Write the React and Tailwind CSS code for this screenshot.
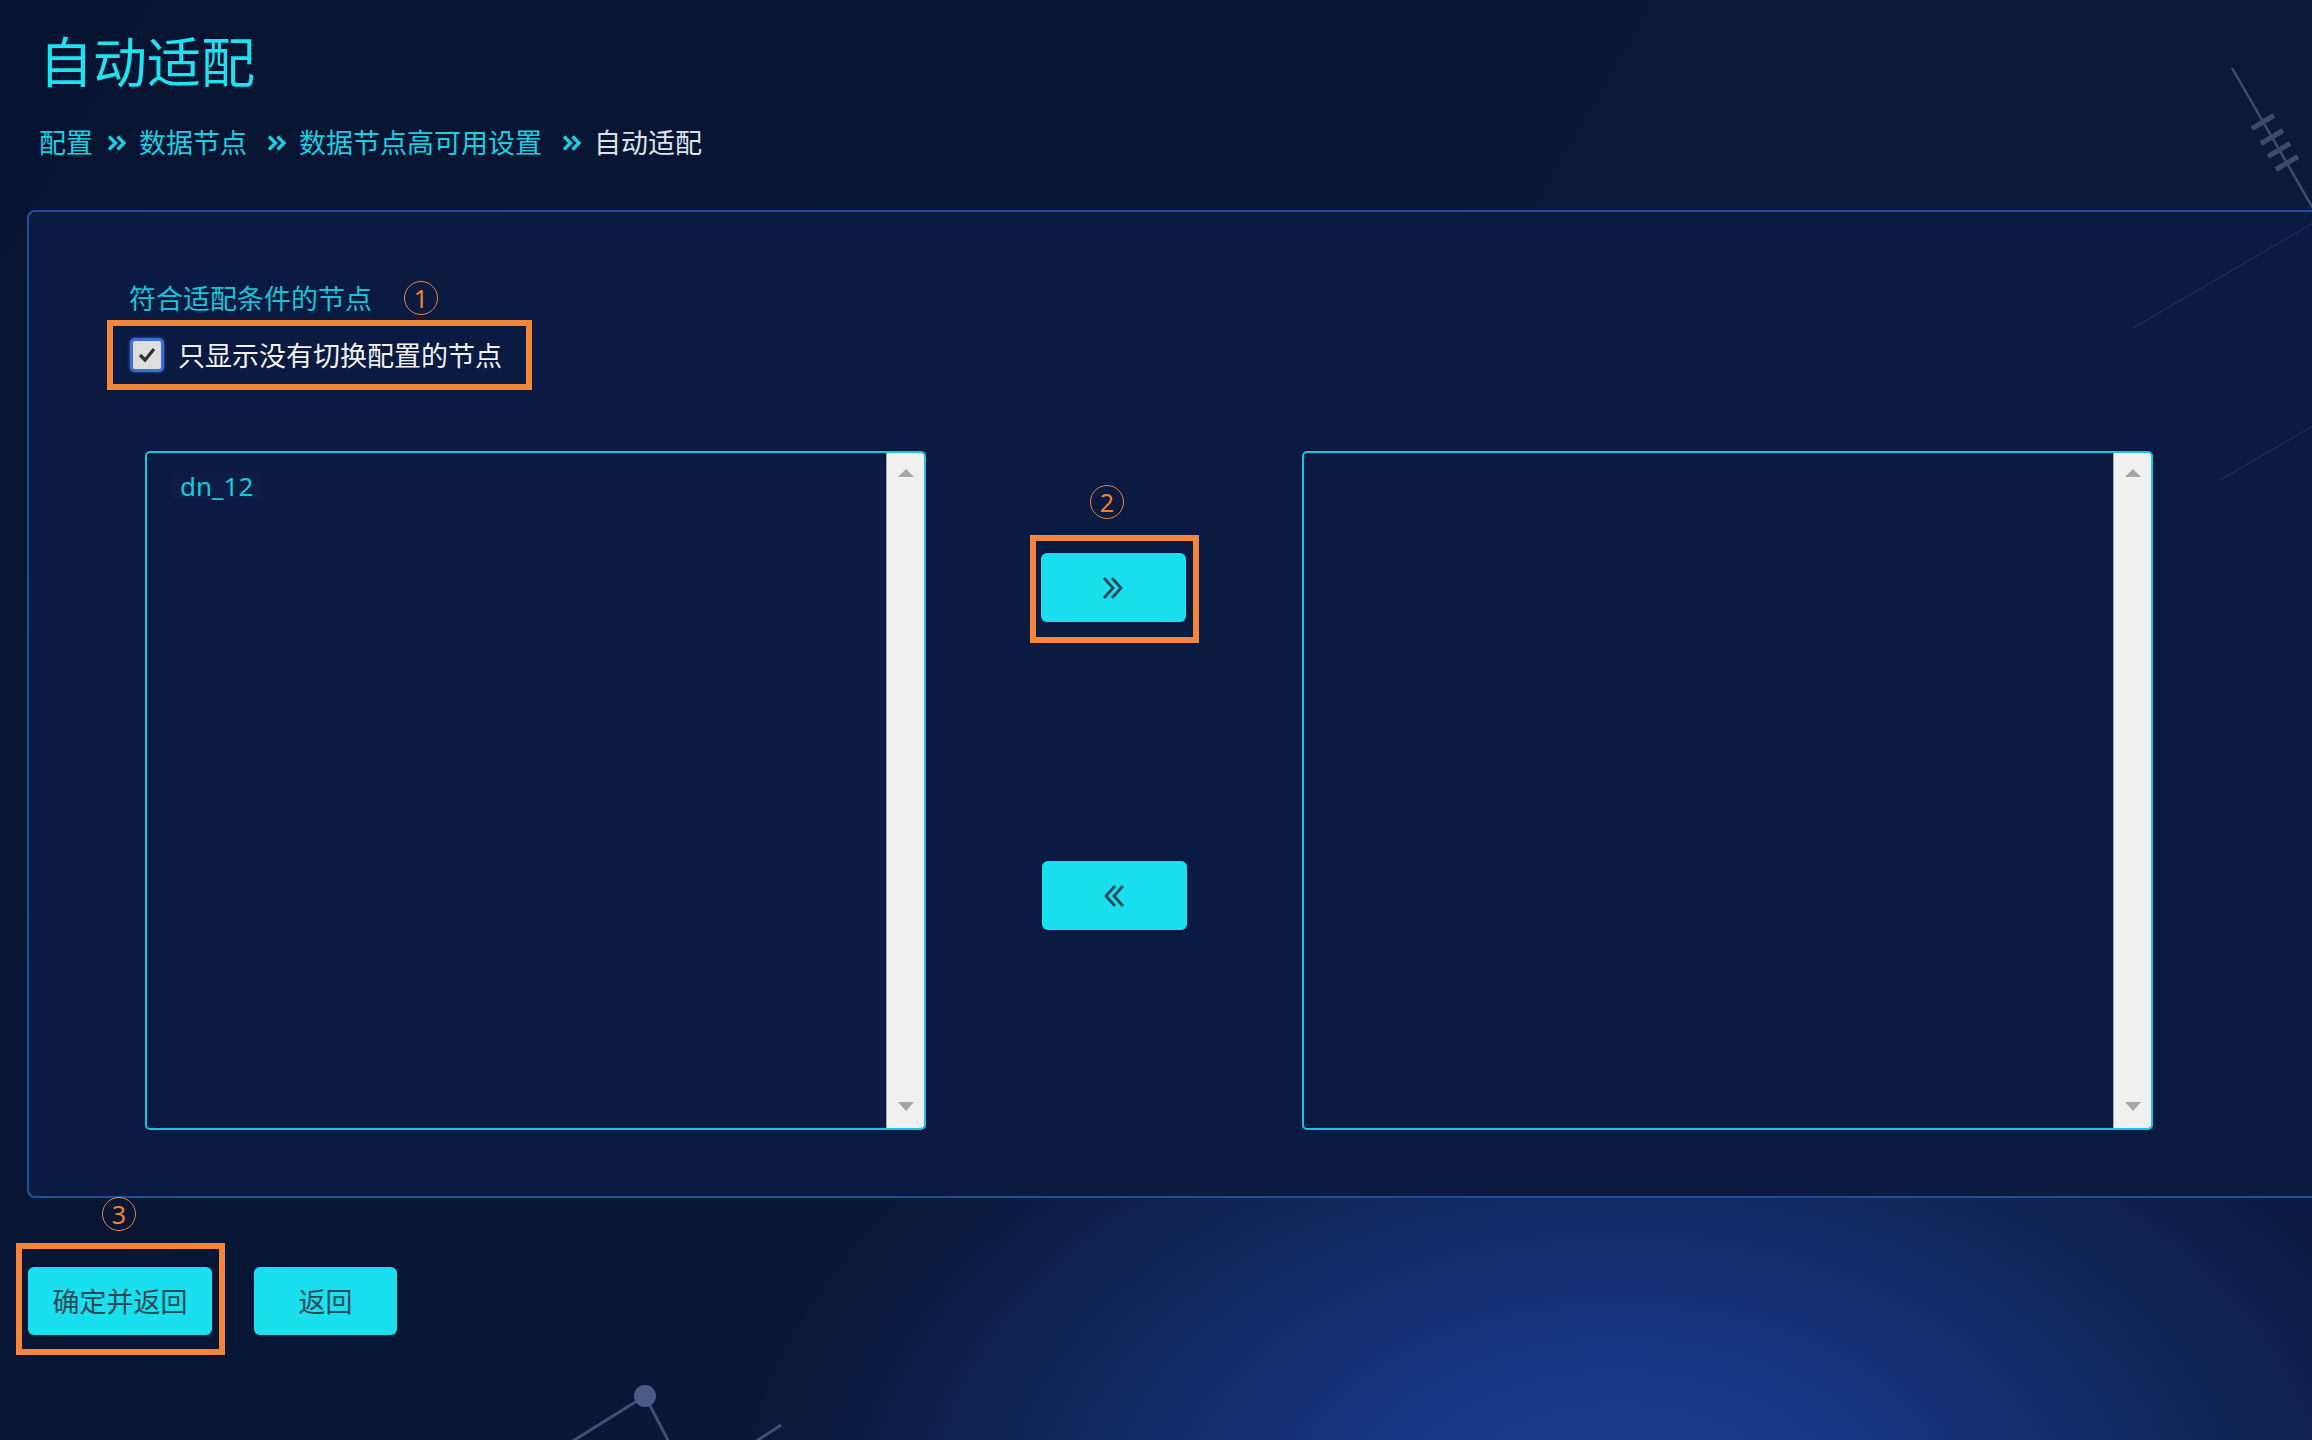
import React from "react";

function Sep({ className }) {
  return (
    <svg width="20" height="16" viewBox="0 0 20 16" className={className}>
      <polyline points="2,1.5 8.5,8 2,14.5" fill="none" stroke="#19cfe0" strokeWidth="3.4" />
      <polyline points="10.5,1.5 17,8 10.5,14.5" fill="none" stroke="#19cfe0" strokeWidth="3.4" />
    </svg>
  );
}

function Circled({ n, className = "" }) {
  return (
    <div
      className={
        "flex h-[34px] w-[34px] items-center justify-center rounded-full border-[1.5px] border-[#ec8236] text-[25px] leading-none text-[#ec8236] " +
        className
      }
    >
      {n}
    </div>
  );
}

function Chevrons({ dir }) {
  const right = dir === "right";
  return (
    <svg width="26" height="24" viewBox="0 0 26 24">
      {right ? (
        <>
          <polyline points="4,2 13,12 4,22" fill="none" stroke="#2d4a5a" strokeWidth="2.8" />
          <polyline points="12,2 21,12 12,22" fill="none" stroke="#2d4a5a" strokeWidth="2.8" />
        </>
      ) : (
        <>
          <polyline points="14,2 5,12 14,22" fill="none" stroke="#2d4a5a" strokeWidth="2.8" />
          <polyline points="22,2 13,12 22,22" fill="none" stroke="#2d4a5a" strokeWidth="2.8" />
        </>
      )}
    </svg>
  );
}

function ListBox({ width, items }) {
  return (
    <div
      className="flex h-[679px] shrink-0 overflow-hidden rounded-[5px] border-2 border-[#15c6dc] bg-[#0b1a40]"
      style={{ width }}
    >
      <div className="flex-1 pt-[20px] pl-[26px]">
        {items.map((it) => (
          <div key={it} className="w-fit bg-[#0d1d46] px-[7px] text-[26px] leading-[26px] text-[#18c8de]">
            {it}
          </div>
        ))}
      </div>
      <div className="flex w-[38px] flex-col items-center justify-between border-l border-[#9ea6b0] bg-[#f0f0f0] pt-[16px] pb-[17px]">
        <svg width="16" height="8" viewBox="0 0 16 8">
          <polygon points="8,0 16,8 0,8" fill="#a6a6a6" />
        </svg>
        <svg width="16" height="9" viewBox="0 0 16 9">
          <polygon points="0,0 16,0 8,9" fill="#a6a6a6" />
        </svg>
      </div>
    </div>
  );
}

export default function App() {
  return (
    <div className="relative h-[1440px] w-[2312px] overflow-hidden bg-[radial-gradient(ellipse_880px_560px_at_1620px_1520px,#1a3e92_0%,#16357e_35%,#0f2556_70%,rgba(10,24,60,0)_100%),linear-gradient(120deg,#071431_0%,#0a1838_50%,#0b1a40_100%)] font-['Noto_Sans','Noto_Sans_CJK_SC',sans-serif]">
      <div className="relative z-10 flex flex-col">
        {/* Header */}
        <div className="pl-[39px] pt-[35px]">
          <h1 className="text-[54px] font-normal leading-[54px] text-[#1fe2f0]">自动适配</h1>
          <div className="mt-[40px] flex items-center text-[27px] leading-[27px] text-[#19cfe0]">
            <span>配置</span>
            <Sep className="ml-[14px] mr-[12px]" />
            <span>数据节点</span>
            <Sep className="ml-[20px] mr-[12px]" />
            <span>数据节点高可用设置</span>
            <Sep className="ml-[20px] mr-[12px]" />
            <span className="text-[#dde2ea]">自动适配</span>
          </div>
        </div>

        {/* Panel */}
        <div className="ml-[27px] mt-[54px] h-[988px] w-[2330px] shrink-0 rounded-[8px] border-2 border-[#1c509a] bg-[#0b1a40]">
          <div className="flex flex-col pt-[69px]">
            <div className="ml-[100px] flex items-center">
              <span className="text-[27px] leading-[27px] text-[#16c3d8]">符合适配条件的节点</span>
              <Circled n="1" className="ml-[32px]" />
            </div>
            <div className="ml-[78px] mt-[5px] flex w-fit items-center border-[6px] border-[#f5853a] py-[12px] pl-[17px] pr-[24px]">
              <div className="flex h-[34px] w-[34px] items-center justify-center rounded-[5px] border-[3px] border-[#3f6fd6] bg-[#dedede] shadow-[0_0_3px_#3f6fd6]">
                <svg width="20" height="20" viewBox="0 0 20 20">
                  <polyline points="3,10 8,15 17,4" fill="none" stroke="#333" strokeWidth="3.2" />
                </svg>
              </div>
              <span className="ml-[14px] text-[27px] leading-[27px] text-[#f2f2f2]">只显示没有切换配置的节点</span>
            </div>

            <div className="ml-[116px] mt-[61px] flex">
              <ListBox width={781} items={["dn_12"]} />
              <div className="flex w-[376px] shrink-0 flex-col items-center">
                <Circled n="2" className="mr-[14px] mt-[34px]" />
                <div className="mt-[16px] border-[6px] border-[#f5853a] pt-[12px] pb-[15px] pl-[5px] pr-[7px]">
                  <button className="flex h-[69px] w-[145px] items-center justify-center rounded-[6px] bg-[#19dfee]">
                    <Chevrons dir="right" />
                  </button>
                </div>
                <button className="mt-[218px] flex h-[69px] w-[145px] items-center justify-center rounded-[6px] bg-[#19dfee]">
                  <Chevrons dir="left" />
                </button>
              </div>
              <ListBox width={851} items={[]} />
            </div>
          </div>
        </div>

        {/* Bottom actions */}
        <div className="flex flex-col pl-[16px]">
          <Circled n="3" className="ml-[86px] -mt-[1px]" />
          <div className="mt-[12px] flex items-start">
            <div className="border-[6px] border-[#f5853a] pt-[18px] pb-[14px] pl-[6px] pr-[7px]">
              <button className="flex h-[68px] w-[184px] items-center justify-center rounded-[6px] bg-[#19dfee] text-[27px] leading-none text-[#2d4a58]">
                确定并返回
              </button>
            </div>
            <button className="ml-[29px] mt-[24px] flex h-[68px] w-[143px] items-center justify-center rounded-[6px] bg-[#19dfee] text-[27px] leading-none text-[#2d4a58]">
              返回
            </button>
          </div>
        </div>
      </div>

      {/* Decorative background lines */}
      <svg
        className="pointer-events-none absolute inset-0 z-20"
        width="2312"
        height="1440"
        viewBox="0 0 2312 1440"
      >
        <line x1="2232" y1="68" x2="2322" y2="224" stroke="#3d4b6b" strokeWidth="2.5" />
        <g stroke="#3d4b6b" strokeWidth="5">
          <line x1="2252" y1="128.5" x2="2274" y2="115.5" />
          <line x1="2261" y1="143.5" x2="2283" y2="130.5" />
          <line x1="2268" y1="156.5" x2="2290" y2="143.5" />
          <line x1="2276" y1="169.5" x2="2298" y2="156.5" />
        </g>
        <line x1="2133" y1="328" x2="2320" y2="219" stroke="#1a2b55" strokeWidth="1.5" />
        <line x1="2220" y1="480" x2="2320" y2="422" stroke="#1a2b55" strokeWidth="1.5" />
        <line x1="645" y1="1396" x2="568" y2="1444" stroke="#3f4e78" strokeWidth="3" />
        <line x1="645" y1="1396" x2="670" y2="1444" stroke="#3f4e78" strokeWidth="3" />
        <line x1="781" y1="1425" x2="752" y2="1444" stroke="#3f4e78" strokeWidth="3" />
        <circle cx="645" cy="1396" r="11" fill="#4b5b88" />
      </svg>
    </div>
  );
}
